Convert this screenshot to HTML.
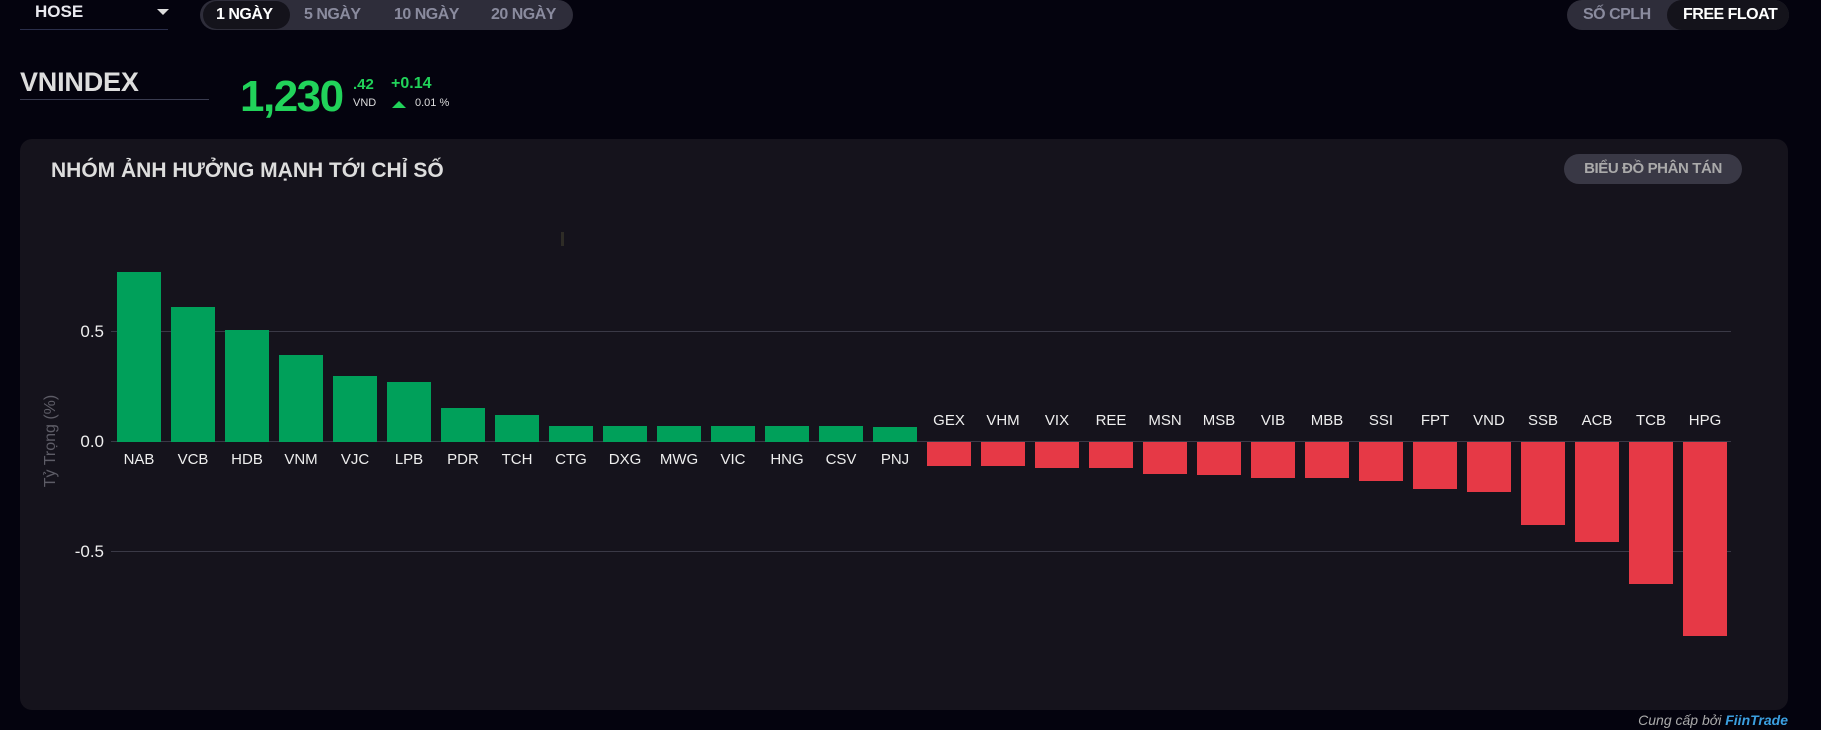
<!DOCTYPE html>
<html><head><meta charset="utf-8"><style>
*{margin:0;padding:0;box-sizing:border-box}
body{width:1821px;height:730px;background:#04030e;font-family:"Liberation Sans",sans-serif;position:relative;overflow:hidden;color:#ddd}
.a{position:absolute;white-space:nowrap}
.b{font-weight:bold}
</style></head><body>
<div class="a b" style="left:35px;top:2px;font-size:17px;color:#e8e8ee">HOSE</div>
<div class="a" style="left:157px;top:9px;width:0;height:0;border-left:6px solid transparent;border-right:6px solid transparent;border-top:6px solid #ddd"></div>
<div class="a" style="left:20px;top:29px;width:148px;height:1px;background:#2a2e4a"></div>

<div class="a" style="left:200px;top:0;width:373px;height:30px;border-radius:15px;background:#2e2d3a"></div>
<div class="a" style="left:203px;top:1px;width:87px;height:28px;border-radius:14px;background:#14131b"></div>
<div class="a b" style="left:216px;top:6px;font-size:16px;color:#fff;letter-spacing:-0.5px">1 NGÀY</div>
<div class="a b" style="left:304px;top:6px;font-size:16px;color:#8a8b9e;letter-spacing:-0.5px">5 NGÀY</div>
<div class="a b" style="left:394px;top:6px;font-size:16px;color:#8a8b9e;letter-spacing:-0.5px">10 NGÀY</div>
<div class="a b" style="left:491px;top:6px;font-size:16px;color:#8a8b9e;letter-spacing:-0.5px">20 NGÀY</div>

<div class="a" style="left:1567px;top:0;width:222px;height:30px;border-radius:15px;background:#2e2d3a"></div>
<div class="a" style="left:1667px;top:0;width:122px;height:30px;border-radius:15px;background:#14131b"></div>
<div class="a b" style="left:1583px;top:6px;font-size:16px;color:#8a8b9e;letter-spacing:-0.5px">SỐ CPLH</div>
<div class="a b" style="left:1683px;top:6px;font-size:16px;color:#fff;letter-spacing:-0.5px">FREE FLOAT</div>

<div class="a b" style="left:20px;top:67px;font-size:27px;color:#ddd;letter-spacing:-0.2px">VNINDEX</div>
<div class="a" style="left:20px;top:99px;width:189px;height:1px;background:#3a3c50"></div>
<div class="a b" style="left:240px;top:72px;font-size:44px;color:#21d35a;letter-spacing:-1.5px">1,230</div>
<div class="a b" style="left:353px;top:76px;font-size:15px;color:#21d35a">.42</div>
<div class="a" style="left:353px;top:97px;font-size:11px;color:#ddd">VND</div>
<div class="a b" style="left:391px;top:75px;font-size:16px;color:#21d35a">+0.14</div>
<div class="a" style="left:392px;top:101px;width:0;height:0;border-left:7px solid transparent;border-right:7px solid transparent;border-bottom:7px solid #21d35a"></div>
<div class="a" style="left:415px;top:97px;font-size:11px;color:#ddd">0.01 %</div>

<div class="a" style="left:20px;top:139px;width:1768px;height:571px;border-radius:12px;background:#15131c"></div>
<div class="a b" style="left:51px;top:159px;font-size:21px;color:#ddd;letter-spacing:0px">NHÓM ẢNH HƯỞNG MẠNH TỚI CHỈ SỐ</div>
<div class="a b" style="left:1564px;top:154px;width:178px;height:30px;border-radius:15px;background:#393845;color:#aaa;font-size:15px;text-align:center;line-height:30px;letter-spacing:-0.4px">BIỂU ĐỒ PHÂN TÁN</div>
<div class="a" style="left:561px;top:232px;width:3px;height:14px;background:#2e2c26"></div>

<svg class="a" style="left:0;top:0" width="1821" height="730">
<g stroke="#3a3946" stroke-width="1">
<line x1="111" y1="331.5" x2="1731" y2="331.5"/>
<line x1="111" y1="441.5" x2="1731" y2="441.5"/>
<line x1="111" y1="551.5" x2="1731" y2="551.5"/>
</g>
<g font-family="Liberation Sans" font-size="17" fill="#eee" text-anchor="end">
<text x="104" y="337">0.5</text><text x="104" y="447">0.0</text><text x="104" y="557">-0.5</text>
</g>
<text transform="translate(55,441) rotate(-90)" font-family="Liberation Sans" font-size="16" fill="#5d5c66" text-anchor="middle">Tỷ Trọng (%)</text>
<g fill="#00a05a">
<rect x="117" y="272" width="44" height="170"/>
<rect x="171" y="307" width="44" height="135"/>
<rect x="225" y="330" width="44" height="112"/>
<rect x="279" y="355" width="44" height="87"/>
<rect x="333" y="376" width="44" height="66"/>
<rect x="387" y="382" width="44" height="60"/>
<rect x="441" y="408" width="44" height="34"/>
<rect x="495" y="415" width="44" height="27"/>
<rect x="549" y="426" width="44" height="16"/>
<rect x="603" y="426" width="44" height="16"/>
<rect x="657" y="426" width="44" height="16"/>
<rect x="711" y="426" width="44" height="16"/>
<rect x="765" y="426" width="44" height="16"/>
<rect x="819" y="426" width="44" height="16"/>
<rect x="873" y="427" width="44" height="15"/>
</g>
<g fill="#e63946">
<rect x="927" y="442" width="44" height="24"/>
<rect x="981" y="442" width="44" height="24"/>
<rect x="1035" y="442" width="44" height="26"/>
<rect x="1089" y="442" width="44" height="26"/>
<rect x="1143" y="442" width="44" height="32"/>
<rect x="1197" y="442" width="44" height="33"/>
<rect x="1251" y="442" width="44" height="36"/>
<rect x="1305" y="442" width="44" height="36"/>
<rect x="1359" y="442" width="44" height="39"/>
<rect x="1413" y="442" width="44" height="47"/>
<rect x="1467" y="442" width="44" height="50"/>
<rect x="1521" y="442" width="44" height="83"/>
<rect x="1575" y="442" width="44" height="100"/>
<rect x="1629" y="442" width="44" height="142"/>
<rect x="1683" y="442" width="44" height="194"/>
</g>
<g font-family="Liberation Sans" font-size="15" fill="#eee" text-anchor="middle">
<text x="139" y="464">NAB</text><text x="193" y="464">VCB</text><text x="247" y="464">HDB</text><text x="301" y="464">VNM</text><text x="355" y="464">VJC</text><text x="409" y="464">LPB</text><text x="463" y="464">PDR</text><text x="517" y="464">TCH</text><text x="571" y="464">CTG</text><text x="625" y="464">DXG</text><text x="679" y="464">MWG</text><text x="733" y="464">VIC</text><text x="787" y="464">HNG</text><text x="841" y="464">CSV</text><text x="895" y="464">PNJ</text>
<text x="949" y="425">GEX</text><text x="1003" y="425">VHM</text><text x="1057" y="425">VIX</text><text x="1111" y="425">REE</text><text x="1165" y="425">MSN</text><text x="1219" y="425">MSB</text><text x="1273" y="425">VIB</text><text x="1327" y="425">MBB</text><text x="1381" y="425">SSI</text><text x="1435" y="425">FPT</text><text x="1489" y="425">VND</text><text x="1543" y="425">SSB</text><text x="1597" y="425">ACB</text><text x="1651" y="425">TCB</text><text x="1705" y="425">HPG</text>
</g>
</svg>
<div class="a" style="right:33px;top:712px;font-size:14px;font-style:italic;color:#aaa">Cung cấp bởi <b style="color:#3b9fe0">FiinTrade</b></div>
</body></html>
